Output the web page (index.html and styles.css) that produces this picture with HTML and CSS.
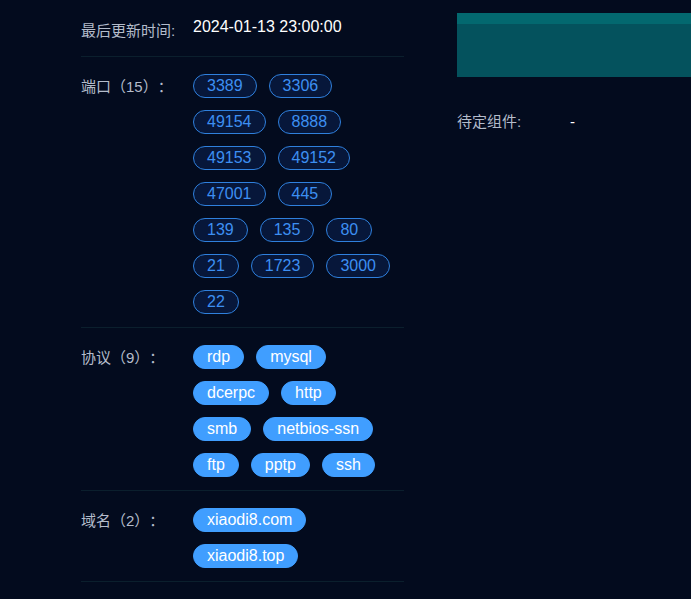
FILE: index.html
```html
<!DOCTYPE html>
<html lang="zh">
<head>
<meta charset="utf-8">
<link rel="stylesheet" href="styles.css">
</head>
<body>
<div class="page">
  <div class="left">
    <div class="row first">
      <div class="label">最后更新时间:</div>
      <div class="value">2024-01-13 23:00:00</div>
    </div>
    <div class="row">
      <div class="label">端口（15）：</div>
      <div class="tags">
        <span class="tag outline">3389</span>
        <span class="tag outline">3306</span>
        <span class="tag outline">49154</span>
        <span class="tag outline">8888</span>
        <span class="tag outline">49153</span>
        <span class="tag outline">49152</span>
        <span class="tag outline">47001</span>
        <span class="tag outline">445</span>
        <span class="tag outline">139</span>
        <span class="tag outline">135</span>
        <span class="tag outline">80</span>
        <span class="tag outline">21</span>
        <span class="tag outline">1723</span>
        <span class="tag outline">3000</span>
        <span class="tag outline">22</span>
      </div>
    </div>
    <div class="row">
      <div class="label">协议（9）：</div>
      <div class="tags">
        <span class="tag solid">rdp</span>
        <span class="tag solid">mysql</span>
        <span class="tag solid">dcerpc</span>
        <span class="tag solid">http</span>
        <span class="tag solid">smb</span>
        <span class="tag solid">netbios-ssn</span>
        <span class="tag solid">ftp</span>
        <span class="tag solid">pptp</span>
        <span class="tag solid">ssh</span>
      </div>
    </div>
    <div class="row">
      <div class="label">域名（2）：</div>
      <div class="tags">
        <span class="tag solid">xiaodi8.com</span>
        <span class="tag solid">xiaodi8.top</span>
      </div>
    </div>
  </div>
  <div class="right">
    <div class="panel"><div class="panel-head"></div></div>
    <div class="pending">
      <span class="pending-label">待定组件:</span>
      <span class="pending-value">-</span>
    </div>
  </div>
</div>
</body>
</html>
```

FILE: styles.css
```css
html, body {
  margin: 0;
  padding: 0;
  background: #030b1e;
  font-family: "Liberation Sans", "Noto Sans CJK SC", sans-serif;
}

.page {
  display: flex;
  align-items: flex-start;
  padding-left: 81px;
  gap: 53px;
  height: 599px;
  overflow: hidden;
}

.left {
  width: 323px;
  flex: none;
}

.row {
  display: flex;
  align-items: flex-start;
  padding: 17px 0 1px;
  border-bottom: 1px solid #0b1f2d;
}

.row.first {
  padding: 19px 0 13px;
}

.label {
  width: 112px;
  flex: none;
  padding-top: 1px;
  font-family: "Liberation Sans", "Noto Sans CJK SC", sans-serif;
  font-size: 15px;
  line-height: 24px;
  color: #b4bccb;
  white-space: nowrap;
  text-spacing-trim: space-all;
}

.row.first .label {
  padding-top: 0;
}

.value {
  font-size: 16px;
  line-height: 16px;
  color: #ffffff;
}

.tags {
  display: flex;
  flex-wrap: wrap;
  flex: 1;
}

.tag {
  display: inline-block;
  height: 24px;
  box-sizing: border-box;
  margin: 0 12px 12px 0;
  padding: 0 13px;
  border-radius: 12px;
  font-size: 16px;
  line-height: 22px;
  white-space: nowrap;
}

.tag.outline {
  border: 1px solid #2f80dd;
  background: #07173a;
  color: #3d8ff2;
}

.tag.solid {
  border: 1px solid #409eff;
  background: #409eff;
  color: #ffffff;
}

.right {
  flex: 1;
  padding-top: 13px;
}

.panel {
  height: 64px;
  background: #04525d;
}

.panel-head {
  height: 11px;
  background: #03686f;
}

.pending {
  display: flex;
  margin-top: 33px;
  line-height: 24px;
}

.pending-label {
  width: 113px;
  flex: none;
  font-size: 15px;
  color: #b4bccb;
}

.pending-value {
  font-size: 15px;
  color: #ffffff;
}
```
